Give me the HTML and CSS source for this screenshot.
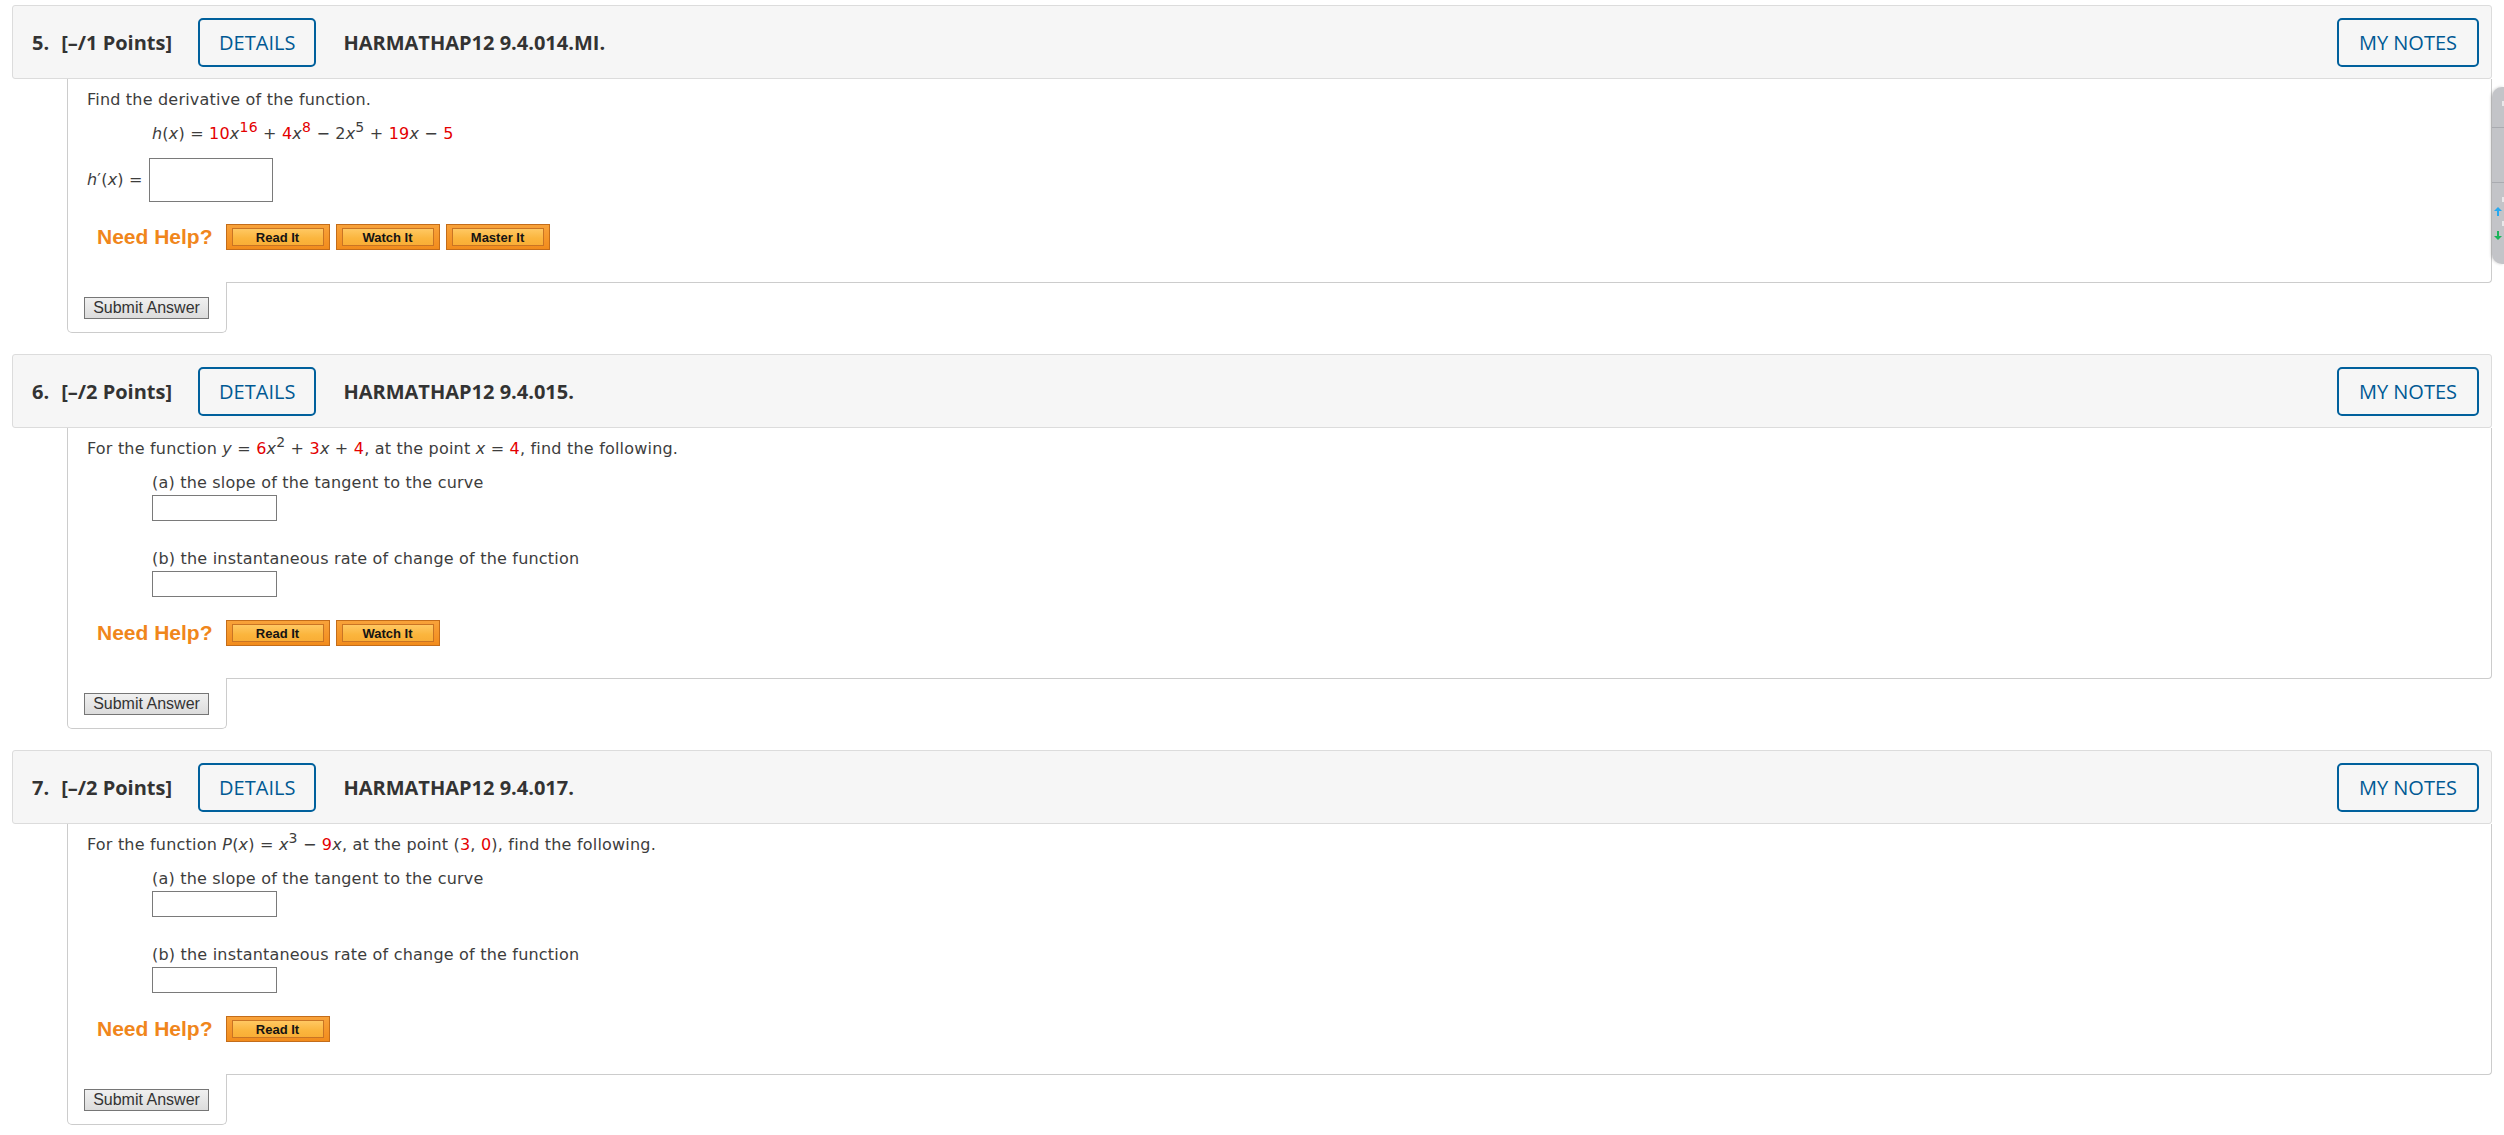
FILE: index.html
```html
<!DOCTYPE html>
<html lang="en">
<head>
<meta charset="utf-8">
<title>Assignment</title>
<link rel="stylesheet" href="styles.css">
</head>
<body>

<div class="question">
  <div class="q-head">
    <span class="q-num">5.</span>
    <span class="q-points">[–/1 Points]</span>
    <button class="outline-btn details">DETAILS</button>
    <span class="q-title">HARMATHAP12 9.4.014.MI.</span>
    <button class="outline-btn notes">MY NOTES</button>
  </div>
  <div class="q-body">
    <p class="intro">Find the derivative of the function.</p>
    <p class="formula"><i>h</i>(<i>x</i>) = <span class="r">10</span><i>x</i><sup class="r">16</sup> + <span class="r">4</span><i>x</i><sup class="r">8</sup> − 2<i>x</i><sup>5</sup> + <span class="r">19</span><i>x</i> − <span class="r">5</span></p>
    <div class="answer-row">
      <span class="answer-label"><i>h</i>′(<i>x</i>) =</span>
      <input class="ans ans-big" type="text" aria-label="answer">
    </div>
    <div class="help-row">
      <span class="need-help">Need Help?</span>
      <span class="help-btn"><span class="help-inner">Read It</span></span>
      <span class="help-btn"><span class="help-inner">Watch It</span></span>
      <span class="help-btn"><span class="help-inner">Master It</span></span>
    </div>
  </div>
  <div class="submit-box"><button class="submit">Submit Answer</button></div>
</div>

<div class="question">
  <div class="q-head">
    <span class="q-num">6.</span>
    <span class="q-points">[–/2 Points]</span>
    <button class="outline-btn details">DETAILS</button>
    <span class="q-title">HARMATHAP12 9.4.015.</span>
    <button class="outline-btn notes">MY NOTES</button>
  </div>
  <div class="q-body">
    <p class="intro">For the function <i>y</i> = <span class="r">6</span><i>x</i><sup>2</sup> + <span class="r">3</span><i>x</i> + <span class="r">4</span>, at the point <i>x</i> = <span class="r">4</span>, find the following.</p>
    <div class="part part-a">
      <p class="part-label">(a) the slope of the tangent to the curve</p>
      <input class="ans ans-sm" type="text" aria-label="answer a">
    </div>
    <div class="part part-b">
      <p class="part-label">(b) the instantaneous rate of change of the function</p>
      <input class="ans ans-sm" type="text" aria-label="answer b">
    </div>
    <div class="help-row">
      <span class="need-help">Need Help?</span>
      <span class="help-btn"><span class="help-inner">Read It</span></span>
      <span class="help-btn"><span class="help-inner">Watch It</span></span>
    </div>
  </div>
  <div class="submit-box"><button class="submit">Submit Answer</button></div>
</div>

<div class="question">
  <div class="q-head">
    <span class="q-num">7.</span>
    <span class="q-points">[–/2 Points]</span>
    <button class="outline-btn details">DETAILS</button>
    <span class="q-title">HARMATHAP12 9.4.017.</span>
    <button class="outline-btn notes">MY NOTES</button>
  </div>
  <div class="q-body">
    <p class="intro">For the function <i>P</i>(<i>x</i>) = <i>x</i><sup>3</sup> − <span class="r">9</span><i>x</i>, at the point (<span class="r">3</span>, <span class="r">0</span>), find the following.</p>
    <div class="part part-a">
      <p class="part-label">(a) the slope of the tangent to the curve</p>
      <input class="ans ans-sm" type="text" aria-label="answer a">
    </div>
    <div class="part part-b">
      <p class="part-label">(b) the instantaneous rate of change of the function</p>
      <input class="ans ans-sm" type="text" aria-label="answer b">
    </div>
    <div class="help-row">
      <span class="need-help">Need Help?</span>
      <span class="help-btn"><span class="help-inner">Read It</span></span>
    </div>
  </div>
  <div class="submit-box"><button class="submit">Submit Answer</button></div>
</div>

<div class="side-widget">
  <div class="sw-cell sw-top"><span class="sw-mark"></span></div>
  <div class="sw-cell sw-mid"></div>
  <div class="sw-cell sw-bottom">
    <span class="sw-mark"></span>
    <svg class="sw-arrow" width="10" height="9" viewBox="0 0 10 9"><path d="M5 0 L9 4 H6 V9 H4 V4 H1 Z" fill="#27a9f0"/></svg>
    <span class="sw-mark"></span>
    <svg class="sw-arrow" width="10" height="9" viewBox="0 0 10 9"><path d="M5 9 L9 5 H6 V0 H4 V5 H1 Z" fill="#1bb45a"/></svg>
  </div>
</div>

</body>
</html>
```

FILE: styles.css
```css
* {
  box-sizing: border-box;
}

html,
body {
  margin: 0;
  background: #ffffff;
}

body {
  padding: 5px 12px 0;
  font-family: "DejaVu Sans", Verdana, sans-serif;
  font-size: 16px;
  color: #3d3d3d;
}

p {
  margin: 0;
}

.question {
  margin-bottom: 21px;
}

/* ---------- header bar ---------- */
.q-head {
  display: flex;
  align-items: center;
  padding: 12px 12px 11px 19px;
  background: #f6f6f6;
  border: 1px solid #dcdcdc;
  border-radius: 3px;
  font-family: "Open Sans", sans-serif;
  font-size: 20px;
  color: #333333;
}

.q-num {
  font-weight: 700;
  margin-right: 12px;
}

.q-points {
  font-weight: 700;
}

.outline-btn {
  display: flex;
  align-items: center;
  height: 49px;
  padding: 0 19px;
  border: 2px solid #00609c;
  border-radius: 5px;
  background: transparent;
  color: #005a94;
  font-family: "Open Sans", sans-serif;
  font-size: 20px;
  font-weight: 500;
  cursor: pointer;
}

.details {
  margin-left: 26px;
}

.q-title {
  margin-left: 27px;
  font-weight: 700;
}

.notes {
  margin-left: auto;
  padding: 0 20px;
}

/* ---------- question body ---------- */
.q-body {
  margin-left: 55px;
  padding: 9px 19px 32px;
  border: 1px solid #cccccc;
  border-top: 0;
  border-radius: 0 0 4px 0;
  line-height: 24px;
  letter-spacing: 0.2px;
}

.intro {
  margin-bottom: 10px;
}

.formula {
  margin-left: 65px;
  margin-bottom: 12px;
}

sup {
  font-size: 14px;
  line-height: 0;
  vertical-align: 7px;
}

.r {
  color: #e40000;
}

i {
  font-style: italic;
}

.answer-row {
  display: flex;
  align-items: center;
  height: 44px;
  margin-bottom: 22px;
}

.answer-label {
  margin-right: 6px;
}

.ans {
  display: block;
  margin: 0;
  padding: 2px 4px;
  border: 1px solid #7a7a7a;
  border-radius: 0;
  background: #ffffff;
  font-family: "DejaVu Sans", sans-serif;
  font-size: 16px;
}

.ans-big {
  width: 124px;
  height: 44px;
}

.ans-sm {
  width: 125px;
  height: 26px;
}

.part {
  margin-left: 65px;
}

.part-a {
  margin-bottom: 26px;
}

.part-b {
  margin-bottom: 23px;
}

/* ---------- need help ---------- */
.help-row {
  display: flex;
  align-items: center;
  height: 26px;
  padding-left: 10px;
  letter-spacing: 0;
}

.need-help {
  margin-right: 13px;
  font-family: "Liberation Sans", Arial, sans-serif;
  font-size: 21px;
  font-weight: 700;
  color: #f0861b;
}

.help-btn {
  display: block;
  width: 104px;
  height: 26px;
  margin-right: 6px;
  padding: 3px 5px;
  border: 1px solid #c46d1a;
  background: linear-gradient(#f8a23a, #f28c1c);
}

.help-inner {
  display: flex;
  align-items: center;
  justify-content: center;
  height: 100%;
  border: 1px solid #c97424;
  background: linear-gradient(#ffc862, #fbb53d 60%, #f9ae36);
  font-family: "Liberation Sans", Arial, sans-serif;
  font-size: 13px;
  font-weight: 700;
  color: #141414;
  line-height: 1;
}

/* ---------- submit area ---------- */
.submit-box {
  width: 160px;
  height: 51px;
  margin-left: 55px;
  margin-top: -1px;
  padding: 15px 0 0 16px;
  background: #ffffff;
  border: 1px solid #cccccc;
  border-top: 0;
  border-radius: 0 0 5px 5px;
}

.submit {
  display: block;
  width: 125px;
  height: 22px;
  padding: 0;
  border: 1px solid #767676;
  border-radius: 0;
  background: linear-gradient(#f0f0f0, #dcdcdc);
  font-family: "Liberation Sans", Arial, sans-serif;
  font-size: 16px;
  color: #333333;
  line-height: 20px;
}

/* ---------- floating side widget (overlay) ---------- */
.side-widget {
  position: absolute;
  left: 2492px;
  top: 87px;
  width: 12px;
  height: 177px;
  display: flex;
  flex-direction: column;
  background: #c3c4c8;
  border-radius: 10px 0 0 10px;
  box-shadow: -1px 0 3px rgba(0, 0, 0, 0.18);
  overflow: hidden;
}

.sw-cell {
  display: flex;
  flex-direction: column;
  align-items: flex-end;
}

.sw-top {
  height: 41px;
  padding-top: 14px;
  border-bottom: 1px solid #a9abb0;
}

.sw-mid {
  height: 55px;
  border-bottom: 1px solid #a9abb0;
}

.sw-bottom {
  flex: 1;
  padding-top: 14px;
  gap: 5px;
}

.sw-mark {
  display: block;
  width: 2px;
  height: 5px;
  background: #e8e8ea;
}

.sw-arrow {
  display: block;
  margin-right: 1px;
}
```
